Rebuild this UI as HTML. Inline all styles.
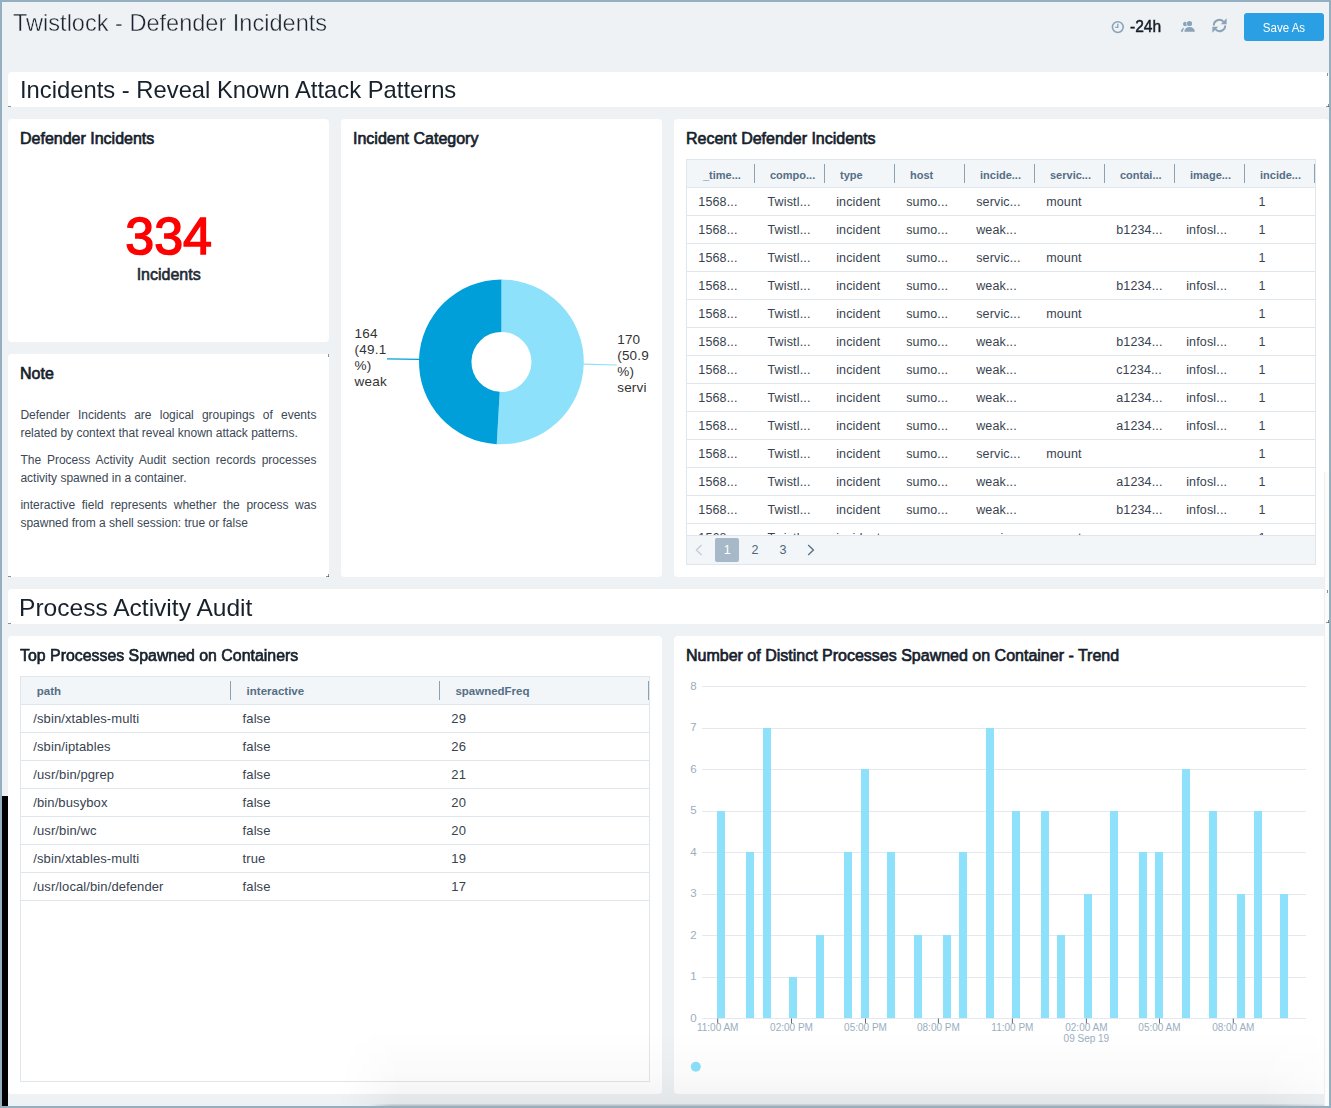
<!DOCTYPE html><html><head><meta charset="utf-8"><style>
html,body{margin:0;padding:0;}
body{width:1331px;height:1108px;position:relative;overflow:hidden;background:#eff2f4;font-family:"Liberation Sans", sans-serif;}
.t{position:absolute;white-space:nowrap;}
.r{position:absolute;}
</style></head><body>
<div class="t" style="left:12.9px;top:11.0px;font-size:24px;line-height:24px;font-weight:400;color:#1a2430;-webkit-text-stroke:0.4px #eff2f4;transform:scaleX(0.981);transform-origin:0 0;">Twistlock - Defender Incidents</div>
<svg class="r" style="left:1110px;top:20px" width="16" height="15" viewBox="0 0 16 15"><circle cx="7.8" cy="7.1" r="5.4" fill="none" stroke="#8aa3b8" stroke-width="1.6"/><path d="M7.8 3.8 V7.3 H5.2" fill="none" stroke="#8aa3b8" stroke-width="1.3"/></svg>
<div class="t" style="left:1130.0px;top:19.0px;font-size:16px;line-height:16px;font-weight:400;color:#141d27;-webkit-text-stroke:0.45px #141d27;transform:scaleX(0.975);transform-origin:0 0;">-24h</div>
<svg class="r" style="left:1180px;top:20px" width="17" height="13" viewBox="0 0 17 13"><circle cx="5.2" cy="4" r="2.2" fill="#8aa3b8"/><circle cx="9.5" cy="3.5" r="3.2" fill="#eff2f4"/><circle cx="9.5" cy="3.5" r="2.6" fill="#8aa3b8"/><path d="M4.3 11.8 C4.5 8.5 6.5 6.9 9.5 6.9 C12.5 6.9 14.6 8.5 14.9 11.8 Z" fill="#8aa3b8"/><path d="M0.8 11.8 C1 9.8 2 8.2 4 7.4 L2.8 11.8 Z" fill="#8aa3b8"/></svg>
<svg class="r" style="left:1211px;top:17px" width="17" height="17" viewBox="0 0 17 17"><path d="M2.8 8.5 A5.6 5.6 0 0 1 12.6 4.8" fill="none" stroke="#8aa3b8" stroke-width="2"/><path d="M15.6 1.3 L15.6 7.2 L9.8 7.2 Z" fill="#8aa3b8"/><path d="M14.2 8.5 A5.6 5.6 0 0 1 4.4 12.2" fill="none" stroke="#8aa3b8" stroke-width="2"/><path d="M1.4 15.7 L1.4 9.8 L7.2 9.8 Z" fill="#8aa3b8"/></svg>
<div class="r" style="left:1244px;top:13px;width:80px;height:28px;background:#2a9fe4;border-radius:3px;"></div>
<div class="t" style="left:1083.8px;width:400px;text-align:center;top:22.0px;font-size:12px;line-height:12px;font-weight:400;color:#ffffff;transform:scaleX(0.96);transform-origin:50% 0;">Save As</div>
<div class="r" style="left:8px;top:72px;width:1321px;height:35px;background:#fff;border-radius:4px 4px 0 0;"></div>
<div class="t" style="left:19.7px;top:78.0px;font-size:24px;line-height:24px;font-weight:400;color:#17212c;transform:scaleX(0.991);transform-origin:0 0;">Incidents - Reveal Known Attack Patterns</div>
<div class="r" style="left:8px;top:119px;width:321px;height:223px;background:#fff;border-radius:4px;"></div>
<div class="r" style="left:8px;top:354px;width:321px;height:223px;background:#fff;border-radius:4px 0 0 0;"></div>
<div class="r" style="left:341px;top:119px;width:321px;height:458px;background:#fff;border-radius:4px;"></div>
<div class="r" style="left:674px;top:119px;width:655px;height:458px;background:#fff;border-radius:4px;"></div>
<div class="r" style="left:8px;top:589px;width:1321px;height:35px;background:#fff;border-radius:4px 4px 0 0;"></div>
<div class="t" style="left:19.3px;top:596.0px;font-size:24px;line-height:24px;font-weight:400;color:#17212c;transform:scaleX(1.023);transform-origin:0 0;">Process Activity Audit</div>
<div class="r" style="left:8px;top:636px;width:654px;height:458px;background:#fff;border-radius:4px;"></div>
<div class="r" style="left:674px;top:636px;width:655px;height:458px;background:#fff;border-radius:4px;"></div>
<div class="t" style="left:20.0px;top:131.0px;font-size:16px;line-height:16px;font-weight:400;color:#15202b;-webkit-text-stroke:0.65px #15202b;">Defender Incidents</div>
<div class="t" style="left:353.0px;top:131.0px;font-size:16px;line-height:16px;font-weight:400;color:#15202b;-webkit-text-stroke:0.65px #15202b;">Incident Category</div>
<div class="t" style="left:686.0px;top:131.0px;font-size:16px;line-height:16px;font-weight:400;color:#15202b;-webkit-text-stroke:0.65px #15202b;">Recent Defender Incidents</div>
<div class="t" style="left:20.0px;top:366.0px;font-size:16px;line-height:16px;font-weight:400;color:#15202b;-webkit-text-stroke:0.65px #15202b;">Note</div>
<div class="t" style="left:20.0px;top:648.0px;font-size:16px;line-height:16px;font-weight:400;color:#15202b;-webkit-text-stroke:0.65px #15202b;transform:scaleX(0.993);transform-origin:0 0;">Top Processes Spawned on Containers</div>
<div class="t" style="left:686.0px;top:648.0px;font-size:16px;line-height:16px;font-weight:400;color:#15202b;-webkit-text-stroke:0.65px #15202b;">Number of Distinct Processes Spawned on Container - Trend</div>
<div class="t" style="left:-31.4px;width:400px;text-align:center;top:210.0px;font-size:52px;line-height:52px;font-weight:400;color:#ff0000;-webkit-text-stroke:1.5px #ff0000;">334</div>
<div class="t" style="left:-31.3px;width:400px;text-align:center;top:267.0px;font-size:16px;line-height:16px;font-weight:400;color:#1f2a36;-webkit-text-stroke:0.6px #1f2a36;">Incidents</div>
<div class="r" style="left:20.4px;top:406px;width:296px;font-size:12px;line-height:18px;color:#3c4855;text-align:justify;">
<p style="margin:0 0 9px 0">Defender Incidents are logical groupings of events related by context that reveal known attack patterns.</p>
<p style="margin:0 0 9px 0">The Process Activity Audit section records processes activity spawned in a container.</p>
<p style="margin:0">interactive field represents whether the process was spawned from a shell session: true or false</p>
</div>
<div class="r" style="left:686px;top:159px;width:630px;height:406px;overflow:hidden;background:#fff">
<div class="r" style="left:0px;top:0px;width:630px;height:29px;background:#f2f6f9;border-bottom:1px solid #dfe6ec;box-sizing:border-box;"></div>
<div class="t" style="left:17.0px;top:11.0px;font-size:11px;line-height:11px;font-weight:700;color:#566e85;">_time...</div>
<div class="r" style="left:68px;top:5px;width:1px;height:19px;background:#8ca1b6;"></div>
<div class="t" style="left:84.0px;top:11.0px;font-size:11px;line-height:11px;font-weight:700;color:#566e85;">compo...</div>
<div class="r" style="left:138px;top:5px;width:1px;height:19px;background:#8ca1b6;"></div>
<div class="t" style="left:154.0px;top:11.0px;font-size:11px;line-height:11px;font-weight:700;color:#566e85;">type</div>
<div class="r" style="left:208px;top:5px;width:1px;height:19px;background:#8ca1b6;"></div>
<div class="t" style="left:224.0px;top:11.0px;font-size:11px;line-height:11px;font-weight:700;color:#566e85;">host</div>
<div class="r" style="left:278px;top:5px;width:1px;height:19px;background:#8ca1b6;"></div>
<div class="t" style="left:294.0px;top:11.0px;font-size:11px;line-height:11px;font-weight:700;color:#566e85;">incide...</div>
<div class="r" style="left:348px;top:5px;width:1px;height:19px;background:#8ca1b6;"></div>
<div class="t" style="left:364.0px;top:11.0px;font-size:11px;line-height:11px;font-weight:700;color:#566e85;">servic...</div>
<div class="r" style="left:418px;top:5px;width:1px;height:19px;background:#8ca1b6;"></div>
<div class="t" style="left:434.0px;top:11.0px;font-size:11px;line-height:11px;font-weight:700;color:#566e85;">contai...</div>
<div class="r" style="left:488px;top:5px;width:1px;height:19px;background:#8ca1b6;"></div>
<div class="t" style="left:504.0px;top:11.0px;font-size:11px;line-height:11px;font-weight:700;color:#566e85;">image...</div>
<div class="r" style="left:558px;top:5px;width:1px;height:19px;background:#8ca1b6;"></div>
<div class="t" style="left:574.0px;top:11.0px;font-size:11px;line-height:11px;font-weight:700;color:#566e85;">incide...</div>
<div class="r" style="left:628px;top:5px;width:1px;height:19px;background:#8ca1b6;"></div>
<div class="r" style="left:0px;top:56px;width:630px;height:1px;background:#dfe6ec;"></div>
<div class="t" style="left:12.3px;top:37.0px;font-size:12.5px;line-height:12.5px;font-weight:400;color:#38434f;letter-spacing:0.15px;">1568...</div>
<div class="t" style="left:81.5px;top:37.0px;font-size:12.5px;line-height:12.5px;font-weight:400;color:#38434f;letter-spacing:0.15px;">Twistl...</div>
<div class="t" style="left:150.2px;top:37.0px;font-size:12.5px;line-height:12.5px;font-weight:400;color:#38434f;letter-spacing:0.15px;">incident</div>
<div class="t" style="left:220.2px;top:37.0px;font-size:12.5px;line-height:12.5px;font-weight:400;color:#38434f;letter-spacing:0.15px;">sumo...</div>
<div class="t" style="left:290.2px;top:37.0px;font-size:12.5px;line-height:12.5px;font-weight:400;color:#38434f;letter-spacing:0.15px;">servic...</div>
<div class="t" style="left:360.2px;top:37.0px;font-size:12.5px;line-height:12.5px;font-weight:400;color:#38434f;letter-spacing:0.15px;">mount</div>
<div class="t" style="left:572.5px;top:37.0px;font-size:12.5px;line-height:12.5px;font-weight:400;color:#38434f;letter-spacing:0.15px;">1</div>
<div class="r" style="left:0px;top:84px;width:630px;height:1px;background:#dfe6ec;"></div>
<div class="t" style="left:12.3px;top:65.0px;font-size:12.5px;line-height:12.5px;font-weight:400;color:#38434f;letter-spacing:0.15px;">1568...</div>
<div class="t" style="left:81.5px;top:65.0px;font-size:12.5px;line-height:12.5px;font-weight:400;color:#38434f;letter-spacing:0.15px;">Twistl...</div>
<div class="t" style="left:150.2px;top:65.0px;font-size:12.5px;line-height:12.5px;font-weight:400;color:#38434f;letter-spacing:0.15px;">incident</div>
<div class="t" style="left:220.2px;top:65.0px;font-size:12.5px;line-height:12.5px;font-weight:400;color:#38434f;letter-spacing:0.15px;">sumo...</div>
<div class="t" style="left:290.2px;top:65.0px;font-size:12.5px;line-height:12.5px;font-weight:400;color:#38434f;letter-spacing:0.15px;">weak...</div>
<div class="t" style="left:430.2px;top:65.0px;font-size:12.5px;line-height:12.5px;font-weight:400;color:#38434f;letter-spacing:0.15px;">b1234...</div>
<div class="t" style="left:500.2px;top:65.0px;font-size:12.5px;line-height:12.5px;font-weight:400;color:#38434f;letter-spacing:0.15px;">infosl...</div>
<div class="t" style="left:572.5px;top:65.0px;font-size:12.5px;line-height:12.5px;font-weight:400;color:#38434f;letter-spacing:0.15px;">1</div>
<div class="r" style="left:0px;top:112px;width:630px;height:1px;background:#dfe6ec;"></div>
<div class="t" style="left:12.3px;top:93.0px;font-size:12.5px;line-height:12.5px;font-weight:400;color:#38434f;letter-spacing:0.15px;">1568...</div>
<div class="t" style="left:81.5px;top:93.0px;font-size:12.5px;line-height:12.5px;font-weight:400;color:#38434f;letter-spacing:0.15px;">Twistl...</div>
<div class="t" style="left:150.2px;top:93.0px;font-size:12.5px;line-height:12.5px;font-weight:400;color:#38434f;letter-spacing:0.15px;">incident</div>
<div class="t" style="left:220.2px;top:93.0px;font-size:12.5px;line-height:12.5px;font-weight:400;color:#38434f;letter-spacing:0.15px;">sumo...</div>
<div class="t" style="left:290.2px;top:93.0px;font-size:12.5px;line-height:12.5px;font-weight:400;color:#38434f;letter-spacing:0.15px;">servic...</div>
<div class="t" style="left:360.2px;top:93.0px;font-size:12.5px;line-height:12.5px;font-weight:400;color:#38434f;letter-spacing:0.15px;">mount</div>
<div class="t" style="left:572.5px;top:93.0px;font-size:12.5px;line-height:12.5px;font-weight:400;color:#38434f;letter-spacing:0.15px;">1</div>
<div class="r" style="left:0px;top:140px;width:630px;height:1px;background:#dfe6ec;"></div>
<div class="t" style="left:12.3px;top:121.0px;font-size:12.5px;line-height:12.5px;font-weight:400;color:#38434f;letter-spacing:0.15px;">1568...</div>
<div class="t" style="left:81.5px;top:121.0px;font-size:12.5px;line-height:12.5px;font-weight:400;color:#38434f;letter-spacing:0.15px;">Twistl...</div>
<div class="t" style="left:150.2px;top:121.0px;font-size:12.5px;line-height:12.5px;font-weight:400;color:#38434f;letter-spacing:0.15px;">incident</div>
<div class="t" style="left:220.2px;top:121.0px;font-size:12.5px;line-height:12.5px;font-weight:400;color:#38434f;letter-spacing:0.15px;">sumo...</div>
<div class="t" style="left:290.2px;top:121.0px;font-size:12.5px;line-height:12.5px;font-weight:400;color:#38434f;letter-spacing:0.15px;">weak...</div>
<div class="t" style="left:430.2px;top:121.0px;font-size:12.5px;line-height:12.5px;font-weight:400;color:#38434f;letter-spacing:0.15px;">b1234...</div>
<div class="t" style="left:500.2px;top:121.0px;font-size:12.5px;line-height:12.5px;font-weight:400;color:#38434f;letter-spacing:0.15px;">infosl...</div>
<div class="t" style="left:572.5px;top:121.0px;font-size:12.5px;line-height:12.5px;font-weight:400;color:#38434f;letter-spacing:0.15px;">1</div>
<div class="r" style="left:0px;top:168px;width:630px;height:1px;background:#dfe6ec;"></div>
<div class="t" style="left:12.3px;top:149.0px;font-size:12.5px;line-height:12.5px;font-weight:400;color:#38434f;letter-spacing:0.15px;">1568...</div>
<div class="t" style="left:81.5px;top:149.0px;font-size:12.5px;line-height:12.5px;font-weight:400;color:#38434f;letter-spacing:0.15px;">Twistl...</div>
<div class="t" style="left:150.2px;top:149.0px;font-size:12.5px;line-height:12.5px;font-weight:400;color:#38434f;letter-spacing:0.15px;">incident</div>
<div class="t" style="left:220.2px;top:149.0px;font-size:12.5px;line-height:12.5px;font-weight:400;color:#38434f;letter-spacing:0.15px;">sumo...</div>
<div class="t" style="left:290.2px;top:149.0px;font-size:12.5px;line-height:12.5px;font-weight:400;color:#38434f;letter-spacing:0.15px;">servic...</div>
<div class="t" style="left:360.2px;top:149.0px;font-size:12.5px;line-height:12.5px;font-weight:400;color:#38434f;letter-spacing:0.15px;">mount</div>
<div class="t" style="left:572.5px;top:149.0px;font-size:12.5px;line-height:12.5px;font-weight:400;color:#38434f;letter-spacing:0.15px;">1</div>
<div class="r" style="left:0px;top:196px;width:630px;height:1px;background:#dfe6ec;"></div>
<div class="t" style="left:12.3px;top:177.0px;font-size:12.5px;line-height:12.5px;font-weight:400;color:#38434f;letter-spacing:0.15px;">1568...</div>
<div class="t" style="left:81.5px;top:177.0px;font-size:12.5px;line-height:12.5px;font-weight:400;color:#38434f;letter-spacing:0.15px;">Twistl...</div>
<div class="t" style="left:150.2px;top:177.0px;font-size:12.5px;line-height:12.5px;font-weight:400;color:#38434f;letter-spacing:0.15px;">incident</div>
<div class="t" style="left:220.2px;top:177.0px;font-size:12.5px;line-height:12.5px;font-weight:400;color:#38434f;letter-spacing:0.15px;">sumo...</div>
<div class="t" style="left:290.2px;top:177.0px;font-size:12.5px;line-height:12.5px;font-weight:400;color:#38434f;letter-spacing:0.15px;">weak...</div>
<div class="t" style="left:430.2px;top:177.0px;font-size:12.5px;line-height:12.5px;font-weight:400;color:#38434f;letter-spacing:0.15px;">b1234...</div>
<div class="t" style="left:500.2px;top:177.0px;font-size:12.5px;line-height:12.5px;font-weight:400;color:#38434f;letter-spacing:0.15px;">infosl...</div>
<div class="t" style="left:572.5px;top:177.0px;font-size:12.5px;line-height:12.5px;font-weight:400;color:#38434f;letter-spacing:0.15px;">1</div>
<div class="r" style="left:0px;top:224px;width:630px;height:1px;background:#dfe6ec;"></div>
<div class="t" style="left:12.3px;top:205.0px;font-size:12.5px;line-height:12.5px;font-weight:400;color:#38434f;letter-spacing:0.15px;">1568...</div>
<div class="t" style="left:81.5px;top:205.0px;font-size:12.5px;line-height:12.5px;font-weight:400;color:#38434f;letter-spacing:0.15px;">Twistl...</div>
<div class="t" style="left:150.2px;top:205.0px;font-size:12.5px;line-height:12.5px;font-weight:400;color:#38434f;letter-spacing:0.15px;">incident</div>
<div class="t" style="left:220.2px;top:205.0px;font-size:12.5px;line-height:12.5px;font-weight:400;color:#38434f;letter-spacing:0.15px;">sumo...</div>
<div class="t" style="left:290.2px;top:205.0px;font-size:12.5px;line-height:12.5px;font-weight:400;color:#38434f;letter-spacing:0.15px;">weak...</div>
<div class="t" style="left:430.2px;top:205.0px;font-size:12.5px;line-height:12.5px;font-weight:400;color:#38434f;letter-spacing:0.15px;">c1234...</div>
<div class="t" style="left:500.2px;top:205.0px;font-size:12.5px;line-height:12.5px;font-weight:400;color:#38434f;letter-spacing:0.15px;">infosl...</div>
<div class="t" style="left:572.5px;top:205.0px;font-size:12.5px;line-height:12.5px;font-weight:400;color:#38434f;letter-spacing:0.15px;">1</div>
<div class="r" style="left:0px;top:252px;width:630px;height:1px;background:#dfe6ec;"></div>
<div class="t" style="left:12.3px;top:233.0px;font-size:12.5px;line-height:12.5px;font-weight:400;color:#38434f;letter-spacing:0.15px;">1568...</div>
<div class="t" style="left:81.5px;top:233.0px;font-size:12.5px;line-height:12.5px;font-weight:400;color:#38434f;letter-spacing:0.15px;">Twistl...</div>
<div class="t" style="left:150.2px;top:233.0px;font-size:12.5px;line-height:12.5px;font-weight:400;color:#38434f;letter-spacing:0.15px;">incident</div>
<div class="t" style="left:220.2px;top:233.0px;font-size:12.5px;line-height:12.5px;font-weight:400;color:#38434f;letter-spacing:0.15px;">sumo...</div>
<div class="t" style="left:290.2px;top:233.0px;font-size:12.5px;line-height:12.5px;font-weight:400;color:#38434f;letter-spacing:0.15px;">weak...</div>
<div class="t" style="left:430.2px;top:233.0px;font-size:12.5px;line-height:12.5px;font-weight:400;color:#38434f;letter-spacing:0.15px;">a1234...</div>
<div class="t" style="left:500.2px;top:233.0px;font-size:12.5px;line-height:12.5px;font-weight:400;color:#38434f;letter-spacing:0.15px;">infosl...</div>
<div class="t" style="left:572.5px;top:233.0px;font-size:12.5px;line-height:12.5px;font-weight:400;color:#38434f;letter-spacing:0.15px;">1</div>
<div class="r" style="left:0px;top:280px;width:630px;height:1px;background:#dfe6ec;"></div>
<div class="t" style="left:12.3px;top:261.0px;font-size:12.5px;line-height:12.5px;font-weight:400;color:#38434f;letter-spacing:0.15px;">1568...</div>
<div class="t" style="left:81.5px;top:261.0px;font-size:12.5px;line-height:12.5px;font-weight:400;color:#38434f;letter-spacing:0.15px;">Twistl...</div>
<div class="t" style="left:150.2px;top:261.0px;font-size:12.5px;line-height:12.5px;font-weight:400;color:#38434f;letter-spacing:0.15px;">incident</div>
<div class="t" style="left:220.2px;top:261.0px;font-size:12.5px;line-height:12.5px;font-weight:400;color:#38434f;letter-spacing:0.15px;">sumo...</div>
<div class="t" style="left:290.2px;top:261.0px;font-size:12.5px;line-height:12.5px;font-weight:400;color:#38434f;letter-spacing:0.15px;">weak...</div>
<div class="t" style="left:430.2px;top:261.0px;font-size:12.5px;line-height:12.5px;font-weight:400;color:#38434f;letter-spacing:0.15px;">a1234...</div>
<div class="t" style="left:500.2px;top:261.0px;font-size:12.5px;line-height:12.5px;font-weight:400;color:#38434f;letter-spacing:0.15px;">infosl...</div>
<div class="t" style="left:572.5px;top:261.0px;font-size:12.5px;line-height:12.5px;font-weight:400;color:#38434f;letter-spacing:0.15px;">1</div>
<div class="r" style="left:0px;top:308px;width:630px;height:1px;background:#dfe6ec;"></div>
<div class="t" style="left:12.3px;top:289.0px;font-size:12.5px;line-height:12.5px;font-weight:400;color:#38434f;letter-spacing:0.15px;">1568...</div>
<div class="t" style="left:81.5px;top:289.0px;font-size:12.5px;line-height:12.5px;font-weight:400;color:#38434f;letter-spacing:0.15px;">Twistl...</div>
<div class="t" style="left:150.2px;top:289.0px;font-size:12.5px;line-height:12.5px;font-weight:400;color:#38434f;letter-spacing:0.15px;">incident</div>
<div class="t" style="left:220.2px;top:289.0px;font-size:12.5px;line-height:12.5px;font-weight:400;color:#38434f;letter-spacing:0.15px;">sumo...</div>
<div class="t" style="left:290.2px;top:289.0px;font-size:12.5px;line-height:12.5px;font-weight:400;color:#38434f;letter-spacing:0.15px;">servic...</div>
<div class="t" style="left:360.2px;top:289.0px;font-size:12.5px;line-height:12.5px;font-weight:400;color:#38434f;letter-spacing:0.15px;">mount</div>
<div class="t" style="left:572.5px;top:289.0px;font-size:12.5px;line-height:12.5px;font-weight:400;color:#38434f;letter-spacing:0.15px;">1</div>
<div class="r" style="left:0px;top:336px;width:630px;height:1px;background:#dfe6ec;"></div>
<div class="t" style="left:12.3px;top:317.0px;font-size:12.5px;line-height:12.5px;font-weight:400;color:#38434f;letter-spacing:0.15px;">1568...</div>
<div class="t" style="left:81.5px;top:317.0px;font-size:12.5px;line-height:12.5px;font-weight:400;color:#38434f;letter-spacing:0.15px;">Twistl...</div>
<div class="t" style="left:150.2px;top:317.0px;font-size:12.5px;line-height:12.5px;font-weight:400;color:#38434f;letter-spacing:0.15px;">incident</div>
<div class="t" style="left:220.2px;top:317.0px;font-size:12.5px;line-height:12.5px;font-weight:400;color:#38434f;letter-spacing:0.15px;">sumo...</div>
<div class="t" style="left:290.2px;top:317.0px;font-size:12.5px;line-height:12.5px;font-weight:400;color:#38434f;letter-spacing:0.15px;">weak...</div>
<div class="t" style="left:430.2px;top:317.0px;font-size:12.5px;line-height:12.5px;font-weight:400;color:#38434f;letter-spacing:0.15px;">a1234...</div>
<div class="t" style="left:500.2px;top:317.0px;font-size:12.5px;line-height:12.5px;font-weight:400;color:#38434f;letter-spacing:0.15px;">infosl...</div>
<div class="t" style="left:572.5px;top:317.0px;font-size:12.5px;line-height:12.5px;font-weight:400;color:#38434f;letter-spacing:0.15px;">1</div>
<div class="r" style="left:0px;top:364px;width:630px;height:1px;background:#dfe6ec;"></div>
<div class="t" style="left:12.3px;top:345.0px;font-size:12.5px;line-height:12.5px;font-weight:400;color:#38434f;letter-spacing:0.15px;">1568...</div>
<div class="t" style="left:81.5px;top:345.0px;font-size:12.5px;line-height:12.5px;font-weight:400;color:#38434f;letter-spacing:0.15px;">Twistl...</div>
<div class="t" style="left:150.2px;top:345.0px;font-size:12.5px;line-height:12.5px;font-weight:400;color:#38434f;letter-spacing:0.15px;">incident</div>
<div class="t" style="left:220.2px;top:345.0px;font-size:12.5px;line-height:12.5px;font-weight:400;color:#38434f;letter-spacing:0.15px;">sumo...</div>
<div class="t" style="left:290.2px;top:345.0px;font-size:12.5px;line-height:12.5px;font-weight:400;color:#38434f;letter-spacing:0.15px;">weak...</div>
<div class="t" style="left:430.2px;top:345.0px;font-size:12.5px;line-height:12.5px;font-weight:400;color:#38434f;letter-spacing:0.15px;">b1234...</div>
<div class="t" style="left:500.2px;top:345.0px;font-size:12.5px;line-height:12.5px;font-weight:400;color:#38434f;letter-spacing:0.15px;">infosl...</div>
<div class="t" style="left:572.5px;top:345.0px;font-size:12.5px;line-height:12.5px;font-weight:400;color:#38434f;letter-spacing:0.15px;">1</div>
<div class="t" style="left:12.3px;top:373.0px;font-size:12.5px;line-height:12.5px;font-weight:400;color:#38434f;letter-spacing:0.15px;">1568...</div>
<div class="t" style="left:81.5px;top:373.0px;font-size:12.5px;line-height:12.5px;font-weight:400;color:#38434f;letter-spacing:0.15px;">Twistl...</div>
<div class="t" style="left:150.2px;top:373.0px;font-size:12.5px;line-height:12.5px;font-weight:400;color:#38434f;letter-spacing:0.15px;">incident</div>
<div class="t" style="left:220.2px;top:373.0px;font-size:12.5px;line-height:12.5px;font-weight:400;color:#38434f;letter-spacing:0.15px;">sumo...</div>
<div class="t" style="left:290.2px;top:373.0px;font-size:12.5px;line-height:12.5px;font-weight:400;color:#38434f;letter-spacing:0.15px;">servic...</div>
<div class="t" style="left:360.2px;top:373.0px;font-size:12.5px;line-height:12.5px;font-weight:400;color:#38434f;letter-spacing:0.15px;">mount</div>
<div class="t" style="left:572.5px;top:373.0px;font-size:12.5px;line-height:12.5px;font-weight:400;color:#38434f;letter-spacing:0.15px;">1</div>
<div class="r" style="left:0px;top:376px;width:630px;height:30px;background:#f2f6f9;border-top:1px solid #dfe6ec;box-sizing:border-box;"></div>
<div class="r" style="left:0px;top:0px;width:630px;height:406px;background:transparent;border:1px solid #dfe6ec;box-sizing:border-box;"></div>
</div>
<div class="r" style="left:715px;top:538px;width:24px;height:24px;background:#a7b8c8;border-radius:2px;"></div>
<div class="t" style="left:527.2px;width:400px;text-align:center;top:544.0px;font-size:12.5px;line-height:12.5px;font-weight:400;color:#ffffff;">1</div>
<div class="t" style="left:555.1px;width:400px;text-align:center;top:544.0px;font-size:12.5px;line-height:12.5px;font-weight:400;color:#4f6579;">2</div>
<div class="t" style="left:583.0px;width:400px;text-align:center;top:544.0px;font-size:12.5px;line-height:12.5px;font-weight:400;color:#4f6579;">3</div>
<svg class="r" style="left:694px;top:543px" width="10" height="14" viewBox="0 0 10 14"><path d="M7.6 2 L2.4 7 L7.6 12" fill="none" stroke="#c3ced8" stroke-width="1.4"/></svg>
<svg class="r" style="left:806px;top:543px" width="10" height="14" viewBox="0 0 10 14"><path d="M2.2 2 L7.4 7 L2.2 12" fill="none" stroke="#5d7386" stroke-width="1.4"/></svg>
<div class="r" style="left:20px;top:676px;width:630px;height:406px;overflow:hidden;background:#fff">
<div class="r" style="left:0px;top:0px;width:630px;height:29px;background:#f2f6f9;border-bottom:1px solid #dfe6ec;box-sizing:border-box;"></div>
<div class="t" style="left:16.8px;top:10.0px;font-size:11.5px;line-height:11.5px;font-weight:700;color:#566e85;">path</div>
<div class="r" style="left:210px;top:5px;width:1px;height:19px;background:#8ca1b6;"></div>
<div class="t" style="left:226.6px;top:10.0px;font-size:11.5px;line-height:11.5px;font-weight:700;color:#566e85;">interactive</div>
<div class="r" style="left:419px;top:5px;width:1px;height:19px;background:#8ca1b6;"></div>
<div class="t" style="left:435.4px;top:10.0px;font-size:11.5px;line-height:11.5px;font-weight:700;color:#566e85;">spawnedFreq</div>
<div class="r" style="left:628px;top:5px;width:1px;height:19px;background:#8ca1b6;"></div>
<div class="r" style="left:0px;top:56px;width:630px;height:1px;background:#dfe6ec;"></div>
<div class="t" style="left:13.3px;top:36.0px;font-size:13px;line-height:13px;font-weight:400;color:#38434f;letter-spacing:0.1px;">/sbin/xtables-multi</div>
<div class="t" style="left:222.6px;top:36.0px;font-size:13px;line-height:13px;font-weight:400;color:#38434f;letter-spacing:0.1px;">false</div>
<div class="t" style="left:431.3px;top:36.0px;font-size:13px;line-height:13px;font-weight:400;color:#38434f;letter-spacing:0.1px;">29</div>
<div class="r" style="left:0px;top:84px;width:630px;height:1px;background:#dfe6ec;"></div>
<div class="t" style="left:13.3px;top:64.0px;font-size:13px;line-height:13px;font-weight:400;color:#38434f;letter-spacing:0.1px;">/sbin/iptables</div>
<div class="t" style="left:222.6px;top:64.0px;font-size:13px;line-height:13px;font-weight:400;color:#38434f;letter-spacing:0.1px;">false</div>
<div class="t" style="left:431.3px;top:64.0px;font-size:13px;line-height:13px;font-weight:400;color:#38434f;letter-spacing:0.1px;">26</div>
<div class="r" style="left:0px;top:112px;width:630px;height:1px;background:#dfe6ec;"></div>
<div class="t" style="left:13.3px;top:92.0px;font-size:13px;line-height:13px;font-weight:400;color:#38434f;letter-spacing:0.1px;">/usr/bin/pgrep</div>
<div class="t" style="left:222.6px;top:92.0px;font-size:13px;line-height:13px;font-weight:400;color:#38434f;letter-spacing:0.1px;">false</div>
<div class="t" style="left:431.3px;top:92.0px;font-size:13px;line-height:13px;font-weight:400;color:#38434f;letter-spacing:0.1px;">21</div>
<div class="r" style="left:0px;top:140px;width:630px;height:1px;background:#dfe6ec;"></div>
<div class="t" style="left:13.3px;top:120.0px;font-size:13px;line-height:13px;font-weight:400;color:#38434f;letter-spacing:0.1px;">/bin/busybox</div>
<div class="t" style="left:222.6px;top:120.0px;font-size:13px;line-height:13px;font-weight:400;color:#38434f;letter-spacing:0.1px;">false</div>
<div class="t" style="left:431.3px;top:120.0px;font-size:13px;line-height:13px;font-weight:400;color:#38434f;letter-spacing:0.1px;">20</div>
<div class="r" style="left:0px;top:168px;width:630px;height:1px;background:#dfe6ec;"></div>
<div class="t" style="left:13.3px;top:148.0px;font-size:13px;line-height:13px;font-weight:400;color:#38434f;letter-spacing:0.1px;">/usr/bin/wc</div>
<div class="t" style="left:222.6px;top:148.0px;font-size:13px;line-height:13px;font-weight:400;color:#38434f;letter-spacing:0.1px;">false</div>
<div class="t" style="left:431.3px;top:148.0px;font-size:13px;line-height:13px;font-weight:400;color:#38434f;letter-spacing:0.1px;">20</div>
<div class="r" style="left:0px;top:196px;width:630px;height:1px;background:#dfe6ec;"></div>
<div class="t" style="left:13.3px;top:176.0px;font-size:13px;line-height:13px;font-weight:400;color:#38434f;letter-spacing:0.1px;">/sbin/xtables-multi</div>
<div class="t" style="left:222.6px;top:176.0px;font-size:13px;line-height:13px;font-weight:400;color:#38434f;letter-spacing:0.1px;">true</div>
<div class="t" style="left:431.3px;top:176.0px;font-size:13px;line-height:13px;font-weight:400;color:#38434f;letter-spacing:0.1px;">19</div>
<div class="r" style="left:0px;top:224px;width:630px;height:1px;background:#dfe6ec;"></div>
<div class="t" style="left:13.3px;top:204.0px;font-size:13px;line-height:13px;font-weight:400;color:#38434f;letter-spacing:0.1px;">/usr/local/bin/defender</div>
<div class="t" style="left:222.6px;top:204.0px;font-size:13px;line-height:13px;font-weight:400;color:#38434f;letter-spacing:0.1px;">false</div>
<div class="t" style="left:431.3px;top:204.0px;font-size:13px;line-height:13px;font-weight:400;color:#38434f;letter-spacing:0.1px;">17</div>
<div class="r" style="left:0px;top:0px;width:630px;height:406px;background:transparent;border:1px solid #dfe6ec;box-sizing:border-box;"></div>
</div>
<svg class="r" style="left:0;top:0" width="1331" height="1108" viewBox="0 0 1331 1108"><path d="M501.40 279.50 A82.4 82.4 0 1 1 496.75 444.17 L499.71 391.85 A30 30 0 1 0 501.40 331.90 Z" fill="#8de1fb"/><path d="M496.75 444.17 A82.4 82.4 0 0 1 501.40 279.50 L501.40 331.90 A30 30 0 0 0 499.71 391.85 Z" fill="#009fd9"/><path d="M387 358.9 L419.5 359.4" stroke="#009fd9" stroke-width="1.2" fill="none"/><path d="M583.5 364.1 L616.7 365" stroke="#8de1fb" stroke-width="1.2" fill="none"/></svg>
<div class="t" style="left:354.6px;top:327.0px;font-size:13.5px;line-height:13.5px;font-weight:400;color:#333333;letter-spacing:0.2px;">164</div>
<div class="t" style="left:354.6px;top:343.0px;font-size:13.5px;line-height:13.5px;font-weight:400;color:#333333;letter-spacing:0.2px;">(49.1</div>
<div class="t" style="left:354.6px;top:359.0px;font-size:13.5px;line-height:13.5px;font-weight:400;color:#333333;letter-spacing:0.2px;">%)</div>
<div class="t" style="left:354.6px;top:375.0px;font-size:13.5px;line-height:13.5px;font-weight:400;color:#333333;letter-spacing:0.2px;">weak</div>
<div class="t" style="left:617.2px;top:333.0px;font-size:13.5px;line-height:13.5px;font-weight:400;color:#333333;letter-spacing:0.2px;">170</div>
<div class="t" style="left:617.2px;top:349.0px;font-size:13.5px;line-height:13.5px;font-weight:400;color:#333333;letter-spacing:0.2px;">(50.9</div>
<div class="t" style="left:617.2px;top:365.0px;font-size:13.5px;line-height:13.5px;font-weight:400;color:#333333;letter-spacing:0.2px;">%)</div>
<div class="t" style="left:617.2px;top:381.0px;font-size:13.5px;line-height:13.5px;font-weight:400;color:#333333;letter-spacing:0.2px;">servi</div>
<svg class="r" style="left:0;top:0" width="1331" height="1108" viewBox="0 0 1331 1108"><rect x="702" y="1018" width="604" height="1" fill="#e3e9ee"/><rect x="702" y="977" width="604" height="1" fill="#e3e9ee"/><rect x="702" y="935" width="604" height="1" fill="#e3e9ee"/><rect x="702" y="894" width="604" height="1" fill="#e3e9ee"/><rect x="702" y="852" width="604" height="1" fill="#e3e9ee"/><rect x="702" y="811" width="604" height="1" fill="#e3e9ee"/><rect x="702" y="769" width="604" height="1" fill="#e3e9ee"/><rect x="702" y="728" width="604" height="1" fill="#e3e9ee"/><rect x="702" y="686" width="604" height="1" fill="#e3e9ee"/><rect x="717" y="811" width="8" height="207" fill="#8de1fb"/><rect x="746" y="852" width="8" height="166" fill="#8de1fb"/><rect x="763" y="728" width="8" height="290" fill="#8de1fb"/><rect x="789" y="977" width="8" height="41" fill="#8de1fb"/><rect x="816" y="935" width="8" height="83" fill="#8de1fb"/><rect x="844" y="852" width="8" height="166" fill="#8de1fb"/><rect x="861" y="769" width="8" height="249" fill="#8de1fb"/><rect x="887" y="852" width="8" height="166" fill="#8de1fb"/><rect x="914" y="935" width="8" height="83" fill="#8de1fb"/><rect x="943" y="935" width="8" height="83" fill="#8de1fb"/><rect x="959" y="852" width="8" height="166" fill="#8de1fb"/><rect x="986" y="728" width="8" height="290" fill="#8de1fb"/><rect x="1012" y="811" width="8" height="207" fill="#8de1fb"/><rect x="1041" y="811" width="8" height="207" fill="#8de1fb"/><rect x="1057" y="935" width="8" height="83" fill="#8de1fb"/><rect x="1084" y="894" width="8" height="124" fill="#8de1fb"/><rect x="1110" y="811" width="8" height="207" fill="#8de1fb"/><rect x="1139" y="852" width="8" height="166" fill="#8de1fb"/><rect x="1155" y="852" width="8" height="166" fill="#8de1fb"/><rect x="1182" y="769" width="8" height="249" fill="#8de1fb"/><rect x="1209" y="811" width="8" height="207" fill="#8de1fb"/><rect x="1237" y="894" width="8" height="124" fill="#8de1fb"/><rect x="1254" y="811" width="8" height="207" fill="#8de1fb"/><rect x="1280" y="894" width="8" height="124" fill="#8de1fb"/><rect x="717.2" y="1018.5" width="1" height="5" fill="#666"/><rect x="791.0" y="1018.5" width="1" height="5" fill="#666"/><rect x="865.0" y="1018.5" width="1" height="5" fill="#666"/><rect x="937.9" y="1018.5" width="1" height="5" fill="#666"/><rect x="1011.9" y="1018.5" width="1" height="5" fill="#666"/><rect x="1085.9" y="1018.5" width="1" height="5" fill="#666"/><rect x="1159.0" y="1018.5" width="1" height="5" fill="#666"/><rect x="1232.8" y="1018.5" width="1" height="5" fill="#666"/><circle cx="695.8" cy="1066.8" r="5" fill="#8de1fb"/></svg>
<div class="t" style="left:690.3px;top:1013.0px;font-size:11.5px;line-height:11.5px;font-weight:400;color:#9aaebf;">0</div>
<div class="t" style="left:690.3px;top:971.0px;font-size:11.5px;line-height:11.5px;font-weight:400;color:#9aaebf;">1</div>
<div class="t" style="left:690.3px;top:930.0px;font-size:11.5px;line-height:11.5px;font-weight:400;color:#9aaebf;">2</div>
<div class="t" style="left:690.3px;top:888.0px;font-size:11.5px;line-height:11.5px;font-weight:400;color:#9aaebf;">3</div>
<div class="t" style="left:690.3px;top:847.0px;font-size:11.5px;line-height:11.5px;font-weight:400;color:#9aaebf;">4</div>
<div class="t" style="left:690.3px;top:805.0px;font-size:11.5px;line-height:11.5px;font-weight:400;color:#9aaebf;">5</div>
<div class="t" style="left:690.3px;top:764.0px;font-size:11.5px;line-height:11.5px;font-weight:400;color:#9aaebf;">6</div>
<div class="t" style="left:690.3px;top:722.0px;font-size:11.5px;line-height:11.5px;font-weight:400;color:#9aaebf;">7</div>
<div class="t" style="left:690.3px;top:681.0px;font-size:11.5px;line-height:11.5px;font-weight:400;color:#9aaebf;">8</div>
<div class="t" style="left:517.7px;width:400px;text-align:center;top:1023.0px;font-size:10px;line-height:10px;font-weight:400;color:#9aaebf;">11:00 AM</div>
<div class="t" style="left:591.5px;width:400px;text-align:center;top:1023.0px;font-size:10px;line-height:10px;font-weight:400;color:#9aaebf;">02:00 PM</div>
<div class="t" style="left:665.5px;width:400px;text-align:center;top:1023.0px;font-size:10px;line-height:10px;font-weight:400;color:#9aaebf;">05:00 PM</div>
<div class="t" style="left:738.4px;width:400px;text-align:center;top:1023.0px;font-size:10px;line-height:10px;font-weight:400;color:#9aaebf;">08:00 PM</div>
<div class="t" style="left:812.4px;width:400px;text-align:center;top:1023.0px;font-size:10px;line-height:10px;font-weight:400;color:#9aaebf;">11:00 PM</div>
<div class="t" style="left:886.4px;width:400px;text-align:center;top:1023.0px;font-size:10px;line-height:10px;font-weight:400;color:#9aaebf;">02:00 AM</div>
<div class="t" style="left:959.5px;width:400px;text-align:center;top:1023.0px;font-size:10px;line-height:10px;font-weight:400;color:#9aaebf;">05:00 AM</div>
<div class="t" style="left:1033.3px;width:400px;text-align:center;top:1023.0px;font-size:10px;line-height:10px;font-weight:400;color:#9aaebf;">08:00 AM</div>
<div class="t" style="left:886.4px;width:400px;text-align:center;top:1034.0px;font-size:10px;line-height:10px;font-weight:400;color:#9aaebf;">09 Sep 19</div>
<div class="r" style="left:340px;top:1030px;width:989px;height:76px;background:linear-gradient(to bottom, rgba(0,0,0,0) 0%, rgba(0,0,0,0.02) 60%, rgba(0,0,0,0.05) 100%);-webkit-mask-image:linear-gradient(to right, transparent 0px, black 60px, black 920px, rgba(0,0,0,0.4) 989px);"></div>
<div class="r" style="left:370px;top:1104px;width:959px;height:2px;background:linear-gradient(to bottom, rgba(0,0,0,0.05), rgba(0,0,0,0.18));-webkit-mask-image:linear-gradient(to right, transparent 0px, black 20px, black 900px, rgba(0,0,0,0.3) 959px);"></div>
<div class="r" style="left:1324px;top:472px;width:5px;height:634px;background:#fcfcfc;border-left:1px solid #efefef;box-sizing:border-box;"></div>
<div class="r" style="left:8px;top:106px;width:3px;height:1px;background:rgba(70,70,70,0.6);"></div>
<div class="r" style="left:1327px;top:73px;width:1px;height:3px;background:rgba(70,70,70,0.6);"></div>
<div class="r" style="left:1326px;top:106px;width:3px;height:1px;background:rgba(70,70,70,0.6);"></div>
<div class="r" style="left:1328px;top:104px;width:1px;height:3px;background:rgba(70,70,70,0.6);"></div>
<div class="r" style="left:328px;top:354px;width:1px;height:3px;background:rgba(70,70,70,0.6);"></div>
<div class="r" style="left:8px;top:576px;width:3px;height:1px;background:rgba(70,70,70,0.6);"></div>
<div class="r" style="left:326px;top:576px;width:3px;height:1px;background:rgba(70,70,70,0.6);"></div>
<div class="r" style="left:328px;top:574px;width:1px;height:3px;background:rgba(70,70,70,0.6);"></div>
<div class="r" style="left:8px;top:623px;width:3px;height:1px;background:rgba(70,70,70,0.6);"></div>
<div class="r" style="left:1327px;top:590px;width:1px;height:3px;background:rgba(70,70,70,0.6);"></div>
<div class="r" style="left:1326px;top:622px;width:3px;height:1px;background:rgba(70,70,70,0.6);"></div>
<div class="r" style="left:1328px;top:620px;width:1px;height:3px;background:rgba(70,70,70,0.6);"></div>
<div class="r" style="left:2px;top:796px;width:6px;height:310px;background:#000;"></div>
<div class="r" style="left:0px;top:0px;width:1331px;height:1108px;background:transparent;border:2px solid #93afc0;box-sizing:border-box;"></div>
</body></html>
